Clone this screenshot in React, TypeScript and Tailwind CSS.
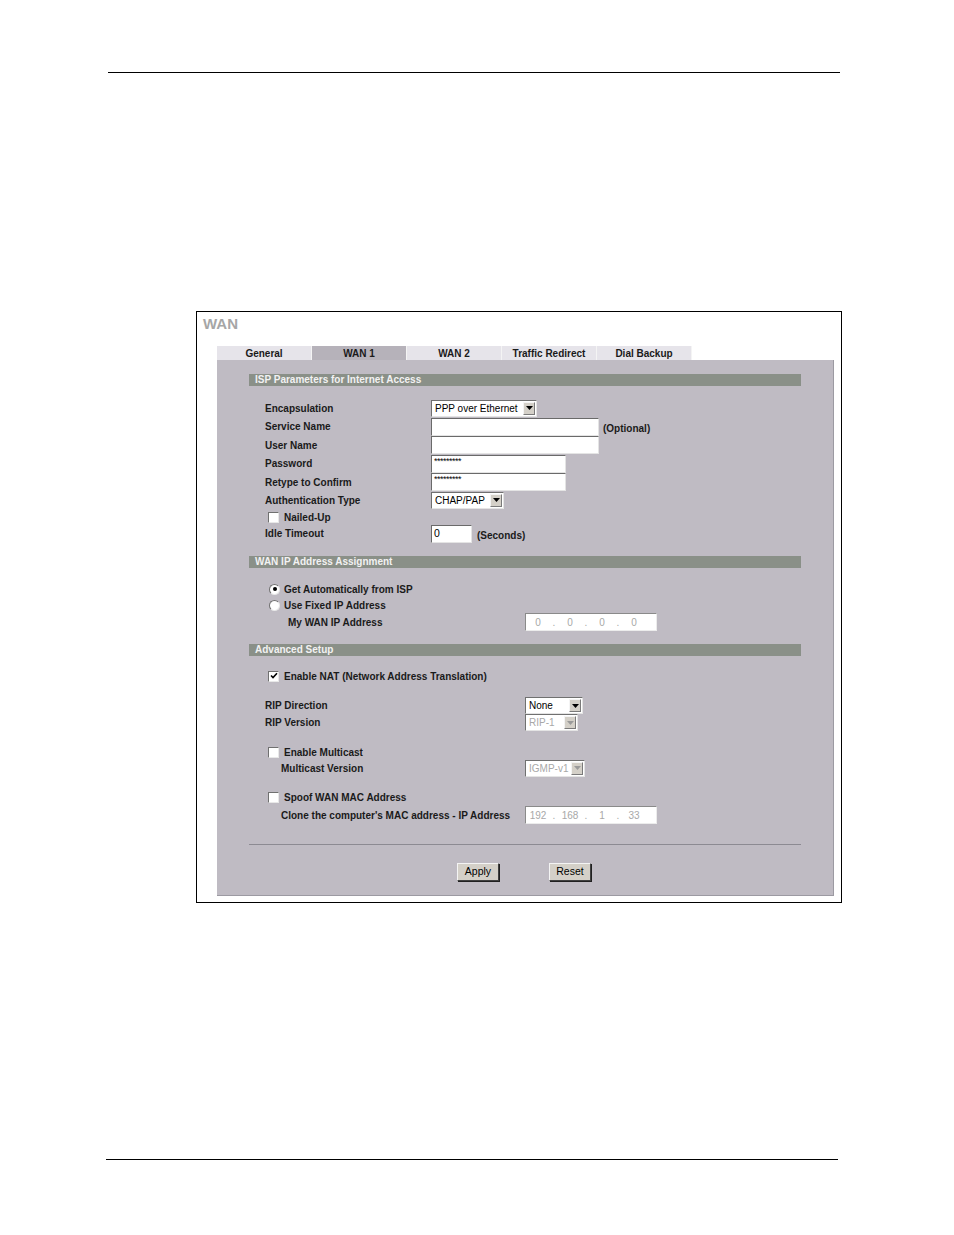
import React from "react";

const font = "font-['Liberation_Sans',Arial,sans-serif]";

function Arrow({ disabled }: { disabled?: boolean }) {
  return (
    <div className="flex w-[12px] shrink-0 items-center justify-center border border-t-[#f4f4f4] border-l-[#f4f4f4] border-b-[#7a7a7a] border-r-[#7a7a7a] bg-[#d4d0c8]">
      <svg width="7" height="4" viewBox="0 0 7 4">
        <path d="M0 0h7L3.5 4z" fill={disabled ? "#9a9a9a" : "#000"} />
      </svg>
    </div>
  );
}

function Select({ value, className, disabled }: { value: string; className: string; disabled?: boolean }) {
  return (
    <div
      className={`flex h-[17px] border border-t-[#707070] border-l-[#707070] border-b-[#e4e4e4] border-r-[#e4e4e4] bg-white p-px ${className}`}
    >
      <span
        className={`flex-1 overflow-hidden whitespace-nowrap pl-[2px] text-[10px] leading-[13px] ${
          disabled ? "text-[#a8a8a8]" : "text-black"
        }`}
      >
        {value}
      </span>
      <Arrow disabled={disabled} />
    </div>
  );
}

function Input({ className, children }: { className: string; children?: React.ReactNode }) {
  return (
    <div
      className={`flex h-[18px] items-center overflow-hidden whitespace-nowrap border border-t-[#6a6a6a] border-l-[#6a6a6a] border-b-[#e4e4e4] border-r-[#e4e4e4] bg-white pl-[2px] text-[10.5px] text-black ${className}`}
    >
      {children}
    </div>
  );
}

function IpBox({ parts }: { parts: string[] }) {
  return (
    <div className="flex h-[18px] w-[132px] items-center border border-t-[#8a8a8a] border-l-[#8a8a8a] border-b-[#ececec] border-r-[#ececec] bg-white text-[10px] text-[#a8a8a8]">
      {parts.map((p, i) => (
        <React.Fragment key={i}>
          <span className="w-[24px] text-center">{p}</span>
          {i < parts.length - 1 && <span className="w-[8px] text-center">.</span>}
        </React.Fragment>
      ))}
    </div>
  );
}

function Check({ checked }: { checked?: boolean }) {
  return (
    <div className="flex h-[11px] w-[11px] shrink-0 items-center justify-center border border-t-[#707070] border-l-[#707070] border-b-[#e8e8e8] border-r-[#e8e8e8] bg-white">
      {checked && (
        <svg width="8" height="8" viewBox="0 0 8 8">
          <path d="M1 3.5l2 2L7 1.2" stroke="#000" strokeWidth="1.6" fill="none" />
        </svg>
      )}
    </div>
  );
}

function Radio({ checked }: { checked?: boolean }) {
  return (
    <div className="flex h-[11px] w-[11px] shrink-0 items-center justify-center rounded-full border border-t-[#707070] border-l-[#707070] border-b-[#e8e8e8] border-r-[#e8e8e8] bg-white">
      {checked && <div className="h-[4px] w-[4px] rounded-full bg-black" />}
    </div>
  );
}

function Bar({ title }: { title: string }) {
  return (
    <div className="flex h-[12px] items-center bg-[#8a9088] pl-[6px] text-[10px] font-bold leading-none text-[#f2f2f2]">
      {title}
    </div>
  );
}

function Row({ h, label, children, labelW = "w-[166px]" }: { h: string; label: React.ReactNode; children?: React.ReactNode; labelW?: string }) {
  return (
    <div className={`flex items-center pl-[16px] ${h}`}>
      <div className={`shrink-0 text-[10px] font-bold text-[#1a1a1a] ${labelW}`}>{label}</div>
      {children}
    </div>
  );
}

function Btn({ label }: { label: string }) {
  return (
    <div className="flex h-[18px] w-[42px] items-center justify-center border border-t-[#f4f4f4] border-l-[#f4f4f4] border-b-[#404040] border-r-[#404040] bg-[#d4d0c8] text-[10.5px] text-black shadow-[1px_1px_0_#202020]">
      {label}
    </div>
  );
}

const tabs = ["General", "WAN 1", "WAN 2", "Traffic Redirect", "Dial Backup"];

export default function App() {
  return (
    <div className={`h-[1235px] w-[954px] bg-white pt-[72px] ${font}`}>
      <div className="ml-[108px] h-px w-[732px] bg-black" />

      <div className="ml-[196px] mt-[238px] h-[592px] w-[646px] border border-black pl-[20px] pt-[4px]">
        <div className="-ml-[14px] text-[15px] font-bold leading-[16px] text-[#a6a6a6]">WAN</div>

        <div className="mt-[14px] flex h-[14px]">
          {tabs.map((t) => (
            <div
              key={t}
              className={`flex w-[95px] items-center justify-center border-r border-[#f4f4f4] text-[10px] font-bold text-[#1a1a1a] ${
                t === "WAN 1" ? "bg-[#b6b2ba]" : "bg-[#e6e4ea]"
              }`}
            >
              {t}
            </div>
          ))}
        </div>

        <div className="h-[536px] w-[617px] border-b border-r border-[#9c9aa2] bg-[#bfbbc3] px-[32px] pt-[14px]">
          <Bar title="ISP Parameters for Internet Access" />
          <div className="mt-[13px]">
            <Row h="h-[18px]" label="Encapsulation">
              <Select value="PPP over Ethernet" className="w-[106px]" />
            </Row>
            <Row h="h-[19px]" label="Service Name">
              <Input className="w-[168px]" />
              <span className="ml-[4px] mt-[4px] text-[10px] font-bold text-[#1a1a1a]">(Optional)</span>
            </Row>
            <Row h="h-[18px]" label="User Name">
              <Input className="w-[168px]" />
            </Row>
            <Row h="h-[19px]" label="Password">
              <Input className="w-[135px] items-start pt-[1px]">
                <span className="text-[9px] leading-[9px] tracking-[-0.5px]">*********</span>
              </Input>
            </Row>
            <Row h="h-[18px]" label="Retype to Confirm">
              <Input className="w-[135px] items-start pt-[1px]">
                <span className="text-[9px] leading-[9px] tracking-[-0.5px]">*********</span>
              </Input>
            </Row>
            <Row h="h-[18px]" label="Authentication Type">
              <Select value="CHAP/PAP" className="w-[73px]" />
            </Row>
            <div className="flex h-[16px] items-center pl-[19px]">
              <Check />
              <span className="ml-[5px] text-[10px] font-bold text-[#1a1a1a]">Nailed-Up</span>
            </div>
            <Row h="h-[17px]" label="Idle Timeout">
              <Input className="w-[41px]">0</Input>
              <span className="ml-[5px] mt-[3px] text-[10px] font-bold text-[#1a1a1a]">(Seconds)</span>
            </Row>
          </div>

          <div className="mt-[14px]">
            <Bar title="WAN IP Address Assignment" />
          </div>
          <div className="mt-[13px]">
            <div className="flex h-[16px] items-center pl-[20px]">
              <Radio checked />
              <span className="ml-[4px] text-[10px] font-bold text-[#1a1a1a]">Get Automatically from ISP</span>
            </div>
            <div className="flex h-[16px] items-center pl-[20px]">
              <Radio />
              <span className="ml-[4px] text-[10px] font-bold text-[#1a1a1a]">Use Fixed IP Address</span>
            </div>
            <div className="flex h-[18px] items-center pl-[39px]">
              <div className="w-[237px] text-[10px] font-bold text-[#1a1a1a]">My WAN IP Address</div>
              <IpBox parts={["0", "0", "0", "0"]} />
            </div>
          </div>

          <div className="mt-[13px]">
            <Bar title="Advanced Setup" />
          </div>
          <div className="mt-[12px] flex h-[16px] items-center pl-[19px]">
            <Check checked />
            <span className="ml-[5px] text-[10px] font-bold text-[#1a1a1a]">Enable NAT (Network Address Translation)</span>
          </div>
          <div className="mt-[13px]">
            <Row h="h-[17px]" label="RIP Direction" labelW="w-[260px]">
              <Select value="None" className="w-[58px]" />
            </Row>
            <Row h="h-[17px]" label="RIP Version" labelW="w-[260px]">
              <Select value="RIP-1" className="w-[53px]" disabled />
            </Row>
          </div>
          <div className="mt-[13px] flex h-[16px] items-center pl-[19px]">
            <Check />
            <span className="ml-[5px] text-[10px] font-bold text-[#1a1a1a]">Enable Multicast</span>
          </div>
          <div className="flex h-[16px] items-center pl-[32px]">
            <div className="w-[244px] text-[10px] font-bold text-[#1a1a1a]">Multicast Version</div>
            <Select value="IGMP-v1" className="w-[60px]" disabled />
          </div>
          <div className="mt-[13px] flex h-[16px] items-center pl-[19px]">
            <Check />
            <span className="ml-[5px] text-[10px] font-bold text-[#1a1a1a]">Spoof WAN MAC Address</span>
          </div>
          <div className="mt-px flex h-[18px] items-center pl-[32px]">
            <div className="w-[244px] text-[10px] font-bold text-[#1a1a1a]">Clone the computer's MAC address - IP Address</div>
            <IpBox parts={["192", "168", "1", "33"]} />
          </div>

          <div className="mt-[20px] h-px bg-[#8c8a92]" />
          <div className="mt-[18px] flex">
            <div className="ml-[208px]">
              <Btn label="Apply" />
            </div>
            <div className="ml-[50px]">
              <Btn label="Reset" />
            </div>
          </div>
        </div>
      </div>

      <div className="ml-[106px] mt-[256px] h-px w-[732px] bg-black" />
    </div>
  );
}
